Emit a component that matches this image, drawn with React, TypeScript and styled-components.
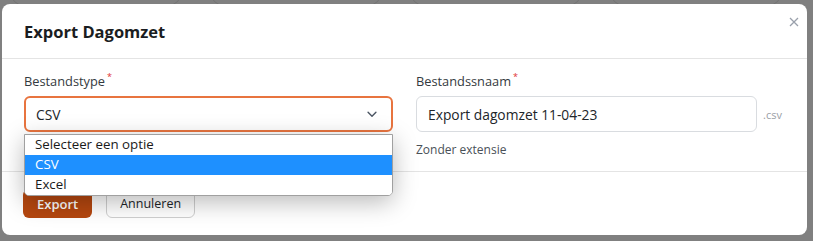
import styled, { createGlobalStyle } from "styled-components";

const GlobalStyle = createGlobalStyle`
  html, body {
    margin: 0;
    padding: 0;
    background: #808080;
    font-family: "Open Sans", "Noto Sans", sans-serif;
    color: #212529;
  }
`;

const options = ["Selecteer een optie", "CSV", "Excel"];

const App = () => {
  return (
    <>
      <GlobalStyle />
      <Backdrop>
        <Behind>
          <Ghost />
          <Ghost />
          <Ghost />
          <Ghost />
        </Behind>
        <Modal>
          <Header>
            <Title>Export Dagomzet</Title>
            <Close aria-label="Sluiten">
              <svg width="10" height="10" viewBox="0 0 10 10">
                <path d="M1 1L9 9M9 1L1 9" stroke="#9aa0ab" strokeWidth="1.3" />
              </svg>
            </Close>
          </Header>
          <Body>
            <Field>
              <Label>
                Bestandstype<Req>*</Req>
              </Label>
              <SelectWrap>
                <SelectBox>
                  <span>CSV</span>
                  <svg width="14" height="14" viewBox="0 0 16 16">
                    <path
                      d="M3.5 6l4.5 4.5L12.5 6"
                      fill="none"
                      stroke="#4b5563"
                      strokeWidth="1.6"
                      strokeLinecap="round"
                      strokeLinejoin="round"
                    />
                  </svg>
                </SelectBox>
                <ListBox>
                  {options.map((item, index) => (
                    <Option key={index} $active={item === "CSV"}>
                      {item}
                    </Option>
                  ))}
                </ListBox>
              </SelectWrap>
            </Field>
            <Field>
              <Label>
                Bestandssnaam<Req>*</Req>
              </Label>
              <InputRow>
                <TextInput>Export dagomzet 11-04-23</TextInput>
                <Ext>.csv</Ext>
              </InputRow>
              <Help>Zonder extensie</Help>
            </Field>
          </Body>
          <Footer>
            <PrimaryButton>Export</PrimaryButton>
            <SecondaryButton>Annuleren</SecondaryButton>
          </Footer>
        </Modal>
      </Backdrop>
    </>
  );
};

const Backdrop = styled.div`
  position: relative;
  width: 813px;
  height: 241px;
  overflow: hidden;
  padding: 4px 6px 0 2px;
  box-sizing: border-box;
`;

const Behind = styled.div`
  position: absolute;
  top: -30px;
  left: 10px;
  display: flex;
  gap: 28px;
`;

const Ghost = styled.div`
  width: 170px;
  height: 34px;
  border: 1px solid #737373;
  border-radius: 14px;
`;

const Modal = styled.div`
  position: relative;
  height: 231px;
  background: #fff;
  border-radius: 8px;
  display: flex;
  flex-direction: column;
`;

const Header = styled.div`
  height: 54px;
  padding: 0 22px;
  display: flex;
  align-items: center;
  justify-content: space-between;
  border-bottom: 1px solid #e4e4e4;
`;

const Title = styled.h2`
  margin: 0;
  font-size: 16.5px;
  font-weight: 700;
  color: #1a1d21;
`;

const Close = styled.button`
  position: absolute;
  top: 9px;
  right: 4px;
  border: 0;
  background: none;
  padding: 4px;
  cursor: pointer;
  display: flex;
`;

const Body = styled.div`
  display: grid;
  grid-template-columns: 369px 369px;
  column-gap: 23px;
  padding: 12px 22px 0;
  height: 113px;
  box-sizing: border-box;
  border-bottom: 1px solid #e4e4e4;
`;

const Field = styled.div`
  display: flex;
  flex-direction: column;
`;

const Label = styled.label`
  font-size: 12.8px;
  line-height: 20px;
  color: #343a40;
  margin-bottom: 5px;
`;

const Req = styled.sup`
  color: #e03131;
  font-size: 9px;
  margin-left: 2px;
  vertical-align: 6px;
  line-height: 0;
`;

const SelectWrap = styled.div`
  position: relative;
`;

const SelectBox = styled.div`
  height: 36px;
  box-sizing: border-box;
  border: 2px solid #e8743f;
  border-radius: 6px;
  padding: 0 12px 0 10px;
  display: flex;
  align-items: center;
  justify-content: space-between;
  font-size: 13.8px;
  color: #212529;
`;

const ListBox = styled.div`
  position: absolute;
  top: 38px;
  left: 0;
  right: 0;
  background: #fff;
  border: 1px solid #a0a0a0;
  border-radius: 0 0 5px 5px;
  box-shadow: 0 6px 24px rgba(0, 0, 0, 0.28);
  overflow: hidden;
  z-index: 2;
`;

const Option = styled.div<{ $active?: boolean }>`
  height: 20px;
  line-height: 19px;
  padding-left: 10px;
  font-size: 13.3px;
  color: ${(p) => (p.$active ? "#fff" : "#1a1a1a")};
  background: ${(p) => (p.$active ? "#1e90ff" : "#fff")};
`;

const InputRow = styled.div`
  display: flex;
  align-items: center;
  gap: 6px;
`;

const TextInput = styled.div`
  flex: 1;
  height: 36px;
  box-sizing: border-box;
  border: 1px solid #d9dce0;
  border-radius: 6px;
  padding: 0 11px;
  display: flex;
  align-items: center;
  font-size: 13.8px;
  color: #212529;
`;

const Ext = styled.span`
  width: 22px;
  font-size: 11px;
  color: #9aa0a6;
`;

const Help = styled.div`
  margin-top: 9px;
  font-size: 12px;
  color: #495057;
`;

const Footer = styled.div`
  flex: 1;
  display: flex;
  align-items: center;
  gap: 14px;
  padding: 0 21px;
`;

const PrimaryButton = styled.button`
  height: 29px;
  padding: 0 14px;
  border: 0;
  border-radius: 6px;
  background: #b5470f;
  color: #fff;
  font-family: inherit;
  font-size: 13px;
  font-weight: 600;
`;

const SecondaryButton = styled.button`
  height: 29px;
  padding: 0 13px;
  border: 1px solid #cfcfcf;
  border-radius: 6px;
  background: #fff;
  color: #212529;
  font-family: inherit;
  font-size: 12.5px;
`;

export default App;
